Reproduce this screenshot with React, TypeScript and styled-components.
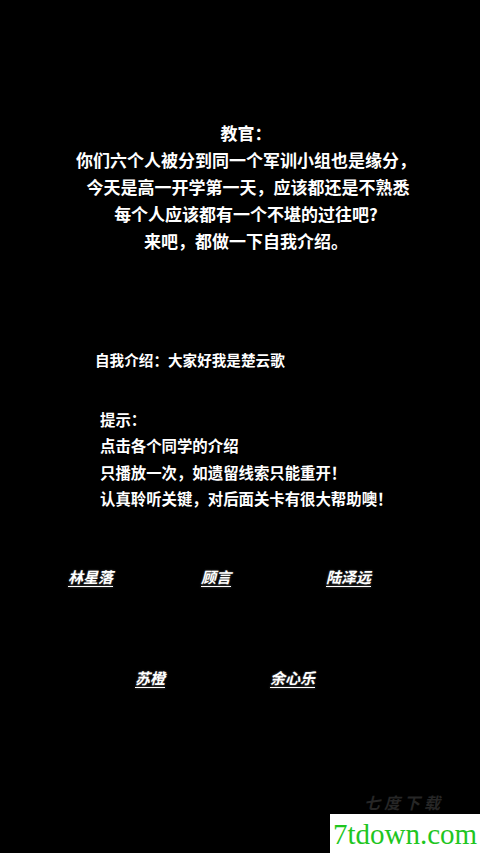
import React from "react";
import styled, { createGlobalStyle } from "styled-components";

const Global = createGlobalStyle`
  html, body { margin: 0; padding: 0; background: #000; }
  body { font-family: "Noto Sans CJK SC", "Noto Sans", sans-serif; }
`;

const Page = styled.div`
  position: relative;
  width: 480px;
  height: 853px;
  background: #000;
  color: #fff;
  overflow: hidden;
  display: flex;
  flex-direction: column;
  padding-top: 119px;
  box-sizing: border-box;
`;

const Dialog = styled.div`
  text-align: center;
  padding-left: 12px;
  font-size: 17px;
  line-height: 27px;
  font-weight: 700;
  white-space: pre;
`;

const Intro = styled.div`
  margin-top: 93px;
  padding-left: 95px;
  font-size: 14.6px;
  line-height: 26px;
  font-weight: 700;
`;

const Hint = styled.div`
  margin-top: 33px;
  padding-left: 100px;
  font-size: 15.4px;
  line-height: 26.3px;
  font-weight: 700;
`;

const NameRow = styled.div<{ $top: number; $left: number }>`
  margin-top: ${(p) => p.$top}px;
  padding-left: ${(p) => p.$left}px;
  display: flex;
`;

const Name = styled.span<{ $w: number }>`
  width: ${(p) => p.$w}px;
  font-size: 15px;
  line-height: 24px;
  font-weight: 700;
  font-style: italic;
  text-decoration: underline;
  text-underline-offset: 3px;
  text-shadow: 0 0 2px rgba(255, 255, 255, 0.4);
`;

const FaintLogo = styled.div`
  position: absolute;
  left: 364px;
  top: 793px;
  font-size: 16px;
  line-height: 18px;
  font-weight: 700;
  font-style: italic;
  color: #262626;
  letter-spacing: 4px;
`;

const Watermark = styled.div`
  position: absolute;
  left: 330px;
  top: 814px;
  width: 150px;
  height: 39px;
  background: #fff;
  display: flex;
  align-items: center;
  justify-content: center;
  font-family: "Liberation Serif", serif;
  font-size: 29px;
  color: #1fc61f;
  padding-top: 2px;
  box-sizing: border-box;
`;

export default function App() {
  return (
    <>
      <Global />
      <Page>
        <Dialog>
          {"教官：\n你们六个人被分到同一个军训小组也是缘分，\n 今天是高一开学第一天，应该都还是不熟悉\n每个人应该都有一个不堪的过往吧?\n来吧，都做一下自我介绍。"}
        </Dialog>
        <Intro>自我介绍：大家好我是楚云歌</Intro>
        <Hint>
          <div>提示：</div>
          <div>点击各个同学的介绍</div>
          <div>只播放一次，如遗留线索只能重开！</div>
          <div>认真聆听关键，对后面关卡有很大帮助噢！</div>
        </Hint>
        <NameRow $top={54} $left={68}>
          <Name $w={133}>林星落</Name>
          <Name $w={125}>顾言</Name>
          <Name $w={60}>陆泽远</Name>
        </NameRow>
        <NameRow $top={77} $left={135}>
          <Name $w={135}>苏橙</Name>
          <Name $w={60}>余心乐</Name>
        </NameRow>
        <FaintLogo>七度下载</FaintLogo>
        <Watermark>7tdown.com</Watermark>
      </Page>
    </>
  );
}
